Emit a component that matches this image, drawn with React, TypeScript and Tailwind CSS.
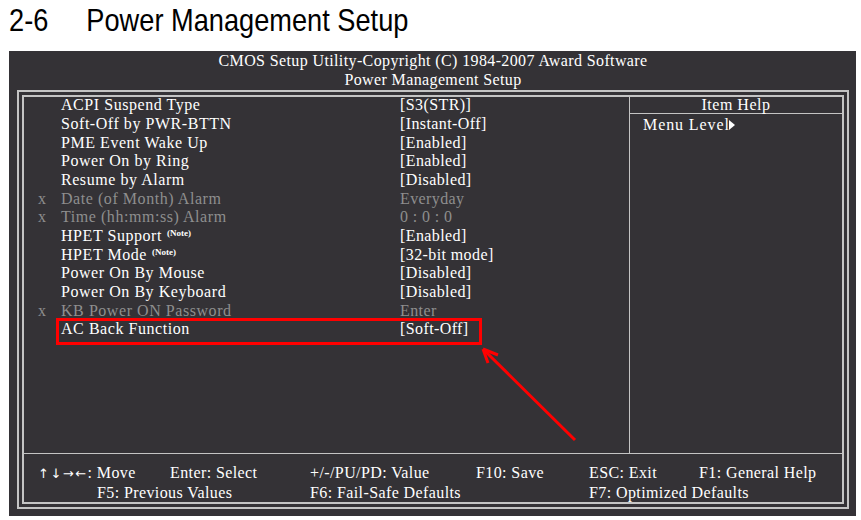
import React from "react";

type Row = {
  label: string;
  value: string;
  note?: boolean;
  off?: boolean;
};

const rows: Row[] = [
  { label: "ACPI Suspend Type", value: "[S3(STR)]" },
  { label: "Soft-Off by PWR-BTTN", value: "[Instant-Off]" },
  { label: "PME Event Wake Up", value: "[Enabled]" },
  { label: "Power On by Ring", value: "[Enabled]" },
  { label: "Resume by Alarm", value: "[Disabled]" },
  { label: "Date (of Month) Alarm", value: "Everyday", off: true },
  { label: "Time (hh:mm:ss) Alarm", value: "0 : 0 : 0", off: true },
  { label: "HPET Support", value: "[Enabled]", note: true },
  { label: "HPET Mode", value: "[32-bit mode]", note: true },
  { label: "Power On By Mouse", value: "[Disabled]" },
  { label: "Power On By Keyboard", value: "[Disabled]" },
  { label: "KB Power ON Password", value: "Enter", off: true },
  { label: "AC Back Function", value: "[Soft-Off]" },
];

const SetupRow = ({ row }: { row: Row }) => (
  <div
    className={`flex h-[18.67px] items-center whitespace-nowrap tracking-[0.55px] ${
      row.off ? "text-[#8e8e8e]" : "text-white"
    }`}
  >
    <span className="w-[37px] pl-[14px]">{row.off ? "x" : ""}</span>
    <span className="w-[339px]">
      {row.label}
      {row.note && (
        <span className="relative -top-[5px] ml-[5px] text-[9px] font-bold tracking-normal">
          (Note)
        </span>
      )}
    </span>
    <span className="tracking-[0.4px]">{row.value}</span>
  </div>
);

const App = () => {
  return (
    <div className="relative w-[861px] h-[520px] overflow-hidden bg-white">
      <h1 className="h-[51px] pl-[9px] pt-[2px] font-['Liberation_Sans_Narrow','Liberation_Sans',Arial,sans-serif] text-[32px] leading-[36px] text-black">
        <div className="flex origin-left scale-x-[0.85] whitespace-nowrap">
          <span className="w-[91px]">2-6</span>
          <span>Power Management Setup</span>
        </div>
      </h1>

      <div className="ml-[9px] flex h-[465px] w-[847px] flex-col bg-[#343236] pb-[7px] pl-[8px] pr-[7px] font-['Liberation_Serif','Times_New_Roman',serif] text-[16px] text-white">
        <div className="pb-[1px] text-center leading-[19px] tracking-[0.38px]">
          <div>CMOS Setup Utility-Copyright (C) 1984-2007 Award Software</div>
          <div>Power Management Setup</div>
        </div>

        <div className="flex-1 border-2 border-[#c4c4c4] p-[3px]">
          <div className="flex h-full flex-col border-2 border-[#c4c4c4]">
            <div className="flex flex-1 border-b border-[#c4c4c4]">
              <div className="w-[606px] border-r border-[#c4c4c4]">
                <div className="-mt-[1px]">
                  {rows.map((row) => (
                    <SetupRow key={row.label} row={row} />
                  ))}
                </div>
              </div>
              <div className="flex-1 tracking-[0.5px]">
                <div className="h-[17px] border-b border-[#c4c4c4] text-center leading-[16px]">
                  Item Help
                </div>
                <div className="flex items-center pl-[13px] pt-[1px] leading-[19px] tracking-[0.9px]">
                  Menu Level
                  <svg width="6" height="10" viewBox="0 0 6 10" className="-ml-[1px]">
                    <path d="M0 0 L6 5 L0 10 Z" fill="white" />
                  </svg>
                </div>
              </div>
            </div>

            <div className="h-[48px] pt-[9px] leading-[19px] whitespace-nowrap tracking-[0.4px]">
              <div className="flex pl-[14px]">
                <span className="w-[132px]">
                  <span className="font-['DejaVu_Sans',sans-serif] text-[13px] tracking-[1.5px]">↑↓→←</span>: Move
                </span>
                <span className="w-[140px]">Enter: Select</span>
                <span className="w-[166px]">+/-/PU/PD: Value</span>
                <span className="w-[113px]">F10: Save</span>
                <span className="w-[110px]">ESC: Exit</span>
                <span>F1: General Help</span>
              </div>
              <div className="flex pl-[73px]">
                <span className="w-[213px]">F5: Previous Values</span>
                <span className="w-[279px]">F6: Fail-Safe Defaults</span>
                <span>F7: Optimized Defaults</span>
              </div>
            </div>
          </div>
        </div>
      </div>

      {/* red annotation: box round the selected row and arrow pointing at it */}
      <svg
        className="pointer-events-none absolute left-0 top-0"
        width="861"
        height="520"
        viewBox="0 0 861 520"
      >
        <rect x="57.5" y="319.5" width="423" height="24" fill="none" stroke="#ff0000" strokeWidth="3" />
        <line x1="575" y1="440" x2="484" y2="350" stroke="#ff0000" strokeWidth="3" />
        <path d="M483 349 L498 355 M483 349 L488 363" stroke="#ff0000" strokeWidth="3" fill="none" />
      </svg>
    </div>
  );
};

export default App;
